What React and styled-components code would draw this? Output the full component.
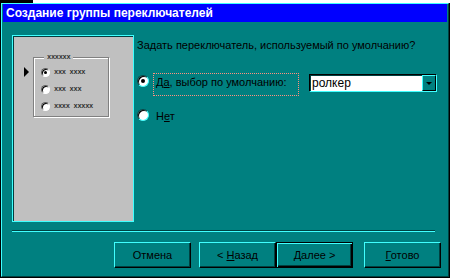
import React from "react";
import styled, { createGlobalStyle } from "styled-components";

const teal = "#008080";
const light = "#40ffff";
const dark = "#004040";

const GlobalStyle = createGlobalStyle`
  html, body {
    margin: 0;
    padding: 0;
    background: #fff;
  }
  body {
    font-family: "Liberation Sans", Arial, sans-serif;
    font-size: 11px;
    color: #000;
  }
`;

const Screen = styled.div`
  width: 450px;
  height: 278px;
  overflow: hidden;
  display: flex;
  flex-direction: column;
`;

const Backdrop = styled.div`
  height: 3px;
  display: flex;
  background: #fff;
  &::before {
    content: "";
    width: 33px;
    background: #000;
  }
`;

const Window = styled.div`
  width: 450px;
  height: 275px;
  box-sizing: border-box;
  border-left: 1px solid #000;
  border-right: 1px solid #000;
  border-bottom: 1px solid #000;
  display: flex;
`;

const Frame = styled.div`
  flex: 1;
  display: flex;
  flex-direction: column;
  background: ${teal};
  border-style: solid;
  border-width: 1px;
  border-color: ${light} ${dark} ${dark} ${light};
  padding: 0 1px 1px 1px;
`;

const TitleBar = styled.div`
  height: 18px;
  background: #0000ff;
  color: #fff;
  font-weight: bold;
  font-size: 12px;
  line-height: 18px;
  padding-left: 3px;
  white-space: nowrap;
`;

const Body = styled.div`
  flex: 1;
  display: flex;
  flex-direction: column;
  padding: 13px 0 0 9px;
`;

const Main = styled.div`
  display: flex;
`;

const Preview = styled.div`
  width: 122px;
  height: 187px;
  box-sizing: border-box;
  background: #c0c0c0;
  border: 1px solid ${light};
  box-shadow: inset 1px 1px 0 ${dark};
  display: flex;
  align-items: flex-start;
  padding: 21px 0 0 11px;
`;

const Marker = styled.span`
  width: 0;
  height: 0;
  margin-top: 10px;
  border-top: 5px solid transparent;
  border-bottom: 5px solid transparent;
  border-left: 5px solid #000;
`;

const GroupBox = styled.div`
  position: relative;
  margin-left: 4px;
  width: 76px;
  height: 60px;
  box-sizing: border-box;
  border: 1px solid #808080;
  box-shadow: 1px 1px 0 #fff, inset 1px 1px 0 #fff;
  display: flex;
  flex-direction: column;
  gap: 8px;
  padding: 10px 0 0 7px;
`;

const Legend = styled.span`
  position: absolute;
  top: -5px;
  left: 10px;
  padding: 0 3px;
  background: #c0c0c0;
  font-family: "Liberation Mono", monospace;
  font-weight: bold;
  font-size: 7px;
  line-height: 8px;
  letter-spacing: -0.3px;
  color: #303030;
`;

const MiniRow = styled.div`
  display: flex;
  align-items: center;
  gap: 4px;
  height: 9px;
`;

const MiniRadio = styled.span`
  width: 9px;
  height: 9px;
  box-sizing: border-box;
  border-radius: 50%;
  background: #fff;
  border: 1px solid;
  border-color: #606060 #fff #fff #606060;
  box-shadow: inset 1px 1px 0 #000;
  display: flex;
  align-items: center;
  justify-content: center;
  &::after {
    content: "";
    width: 3px;
    height: 3px;
    border-radius: 50%;
    background: ${(p) => (p.$on ? "#000" : "transparent")};
  }
`;

const Dummy = styled.span`
  font-family: "Liberation Mono", monospace;
  font-weight: bold;
  font-size: 7px;
  line-height: 9px;
  letter-spacing: -0.3px;
  color: #303030;
  white-space: nowrap;
`;

const Options = styled.div`
  margin-left: 3px;
  display: flex;
  flex-direction: column;
`;

const Question = styled.div`
  margin-top: 4px;
  line-height: 13px;
  white-space: nowrap;
`;

const OptionRow = styled.div`
  display: flex;
  align-items: flex-start;
  margin-top: ${(p) => p.$gap}px;
`;

const Radio = styled.span`
  margin-top: 2px;
  width: 12px;
  height: 12px;
  box-sizing: border-box;
  border-radius: 50%;
  background: #fff;
  border: 1px solid;
  border-color: ${dark} ${light} ${light} ${dark};
  box-shadow: inset 1px 1px 0 #000;
  display: flex;
  align-items: center;
  justify-content: center;
  &::after {
    content: "";
    width: 4px;
    height: 4px;
    border-radius: 50%;
    background: ${(p) => (p.$on ? "#000" : "transparent")};
  }
`;

const Label = styled.span`
  margin-left: 4px;
  box-sizing: border-box;
  height: 23px;
  width: ${(p) => (p.$focus ? "146px" : "auto")};
  padding: 2px 0 0 2px;
  border: 1px dotted ${(p) => (p.$focus ? "#ff9080" : "transparent")};
  line-height: 13px;
  white-space: nowrap;
  u {
    text-decoration: underline;
    text-underline-offset: 1px;
  }
`;

const Combo = styled.div`
  margin: 1px 0 0 10px;
  width: 128px;
  height: 18px;
  box-sizing: border-box;
  background: #fff;
  border: 1px solid;
  border-color: #000 ${light} ${light} #000;
  box-shadow: inset 1px 1px 0 ${dark};
  display: flex;
  align-items: stretch;
`;

const ComboText = styled.span`
  flex: 1;
  padding-left: 2px;
  font-size: 12px;
  line-height: 16px;
`;

const ComboButton = styled.span`
  width: 14px;
  box-sizing: border-box;
  background: ${teal};
  border: 1px solid;
  border-color: ${light} #000 #000 ${light};
  display: flex;
  align-items: center;
  justify-content: center;
  &::after {
    content: "";
    border-left: 3px solid transparent;
    border-right: 3px solid transparent;
    border-top: 3px solid #000;
  }
`;

const Separator = styled.div`
  margin-top: 8px;
  width: 423px;
  height: 1px;
  border-top: 1px solid ${dark};
  background: ${light};
`;

const ButtonRow = styled.div`
  margin-top: 10px;
  padding-right: 6px;
  display: flex;
  justify-content: flex-end;
`;

const Button = styled.button`
  width: 77px;
  height: 26px;
  margin-left: ${(p) => p.$gap || 0}px;
  box-sizing: border-box;
  background: ${teal};
  font-family: "Liberation Sans", Arial, sans-serif;
  font-size: 11px;
  color: #000;
  padding: 0;
  border: 1px solid;
  border-color: ${(p) => (p.$default ? "#000" : `${light} #000 #000 ${light}`)};
  box-shadow: ${(p) =>
    p.$default
      ? `inset 1px 1px 0 ${light}, inset -1px -1px 0 #000, inset -2px -2px 0 ${dark}`
      : `inset -1px -1px 0 ${dark}`};
  u {
    text-decoration: underline;
    text-underline-offset: 1px;
  }
`;

export default function App() {
  return (
    <Screen>
      <GlobalStyle />
      <Backdrop />
      <Window>
        <Frame>
          <TitleBar>Создание группы переключателей</TitleBar>
          <Body>
            <Main>
              <Preview>
                <Marker />
                <GroupBox>
                  <Legend>xxxxxx</Legend>
                  <MiniRow>
                    <MiniRadio $on />
                    <Dummy>xxx xxxx</Dummy>
                  </MiniRow>
                  <MiniRow>
                    <MiniRadio />
                    <Dummy>xxx xxx</Dummy>
                  </MiniRow>
                  <MiniRow>
                    <MiniRadio />
                    <Dummy>xxxx xxxxx</Dummy>
                  </MiniRow>
                </GroupBox>
              </Preview>
              <Options>
                <Question>Задать переключатель, используемый по умолчанию?</Question>
                <OptionRow $gap={21}>
                  <Radio $on />
                  <Label $focus>
                    Д<u>а</u>, выбор по умолчанию:
                  </Label>
                  <Combo>
                    <ComboText>ролкер</ComboText>
                    <ComboButton />
                  </Combo>
                </OptionRow>
                <OptionRow $gap={11}>
                  <Radio />
                  <Label>
                    Н<u>е</u>т
                  </Label>
                </OptionRow>
              </Options>
            </Main>
            <Separator />
            <ButtonRow>
              <Button>Отмена</Button>
              <Button $gap={8}>
                &lt; <u>Н</u>азад
              </Button>
              <Button $default>
                <u>Д</u>алее &gt;
              </Button>
              <Button $gap={11}>
                <u>Г</u>отово
              </Button>
            </ButtonRow>
          </Body>
        </Frame>
      </Window>
    </Screen>
  );
}
